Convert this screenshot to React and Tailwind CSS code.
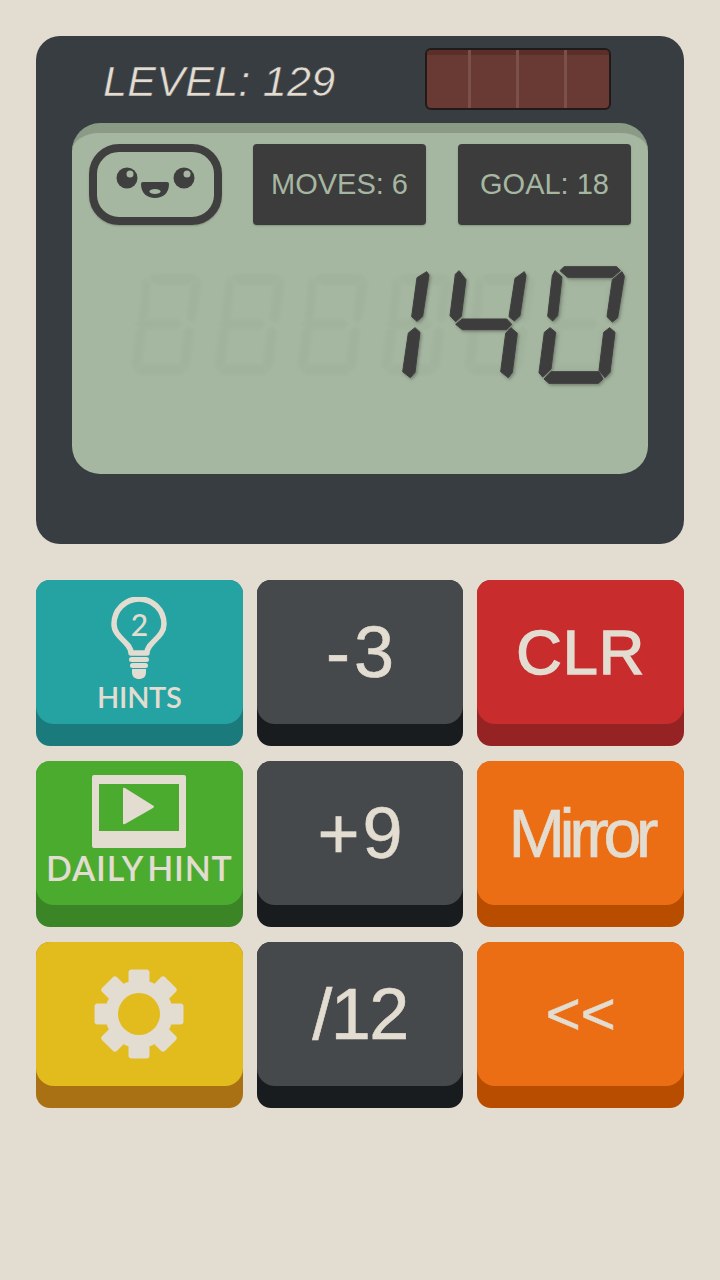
const ZERO = [
  '525,47 537,35 695,35 706,47 682,67 548,67',
  '711,50 718,64 698,188 682,201 666,185 682,74',
  '510,47 531,66 518,182 503,198 488,184 502,62',
  '495,218 512,232 498,342 473,366 462,353 478,232',
  '477,372 498,350 642,350 654,372 640,385 492,385',
  '674,218 690,232 675,352 660,368 642,346 656,232',
];
const MIDDLE = '477,208 497,192 630,192 645,208 630,224 497,224';
const ONE = [
  '125,50 132,60 113,184 96,199 80,185 96,68',
  '90,218 105,232 90,352 76,368 53,350 70,234',
];
const FOUR = [
  '222,47 243,74 229,184 212,200 195,182 211,58',
  '418,50 423,62 405,182 388,198 372,185 390,70',
  '212,208 232,192 365,192 380,208 365,224 232,224',
  '378,218 397,235 382,352 370,368 347,350 362,235',
];
const GHOSTS = [60, 143, 226, 310, 393, 476];

function Display() {
  return (
    <svg className="absolute left-0 top-0" width="576" height="341" viewBox="0 0 576 341">
      <defs>
        <filter id="lcdShadow" x="-10%" y="-10%" width="125%" height="125%">
          <feDropShadow dx="4" dy="5" stdDeviation="4" floodColor="#3a3f38" floodOpacity="0.45" />
        </filter>
        <filter id="ghostBlur">
          <feGaussianBlur stdDeviation="3" />
        </filter>
      </defs>
      {/* unlit segments */}
      {GHOSTS.map((x) => (
        <g key={x} transform={`translate(${x - 124.7} 132) scale(0.27 0.285)`} fill="#97a893" stroke="#97a893" strokeWidth="6" opacity="0.22" filter="url(#ghostBlur)">
          {ZERO.map((p) => <polygon key={p} points={p} />)}
          <polygon points={MIDDLE} />
        </g>
      ))}
      {/* lit segments */}
      <g transform="translate(313 122) scale(0.33333)" fill="#3e3e3e" stroke="#3e3e3e" strokeWidth="3" strokeLinejoin="round" filter="url(#lcdShadow)">
        {[...ONE, ...FOUR, ...ZERO].map((p) => <polygon key={p} points={p} />)}
      </g>
    </svg>
  );
}

function Bulb() {
  return (
    <div className="relative h-[84px] w-[56px]">
      <svg width="56" height="84" viewBox="0 0 56 84" className="absolute left-0 top-0" fill="none">
        <path d="M20 56 C20 45 3 41 3 27 A25 25 0 1 1 53 27 C53 41 36 45 36 56 Z" stroke="#e3dcd0" strokeWidth="5.5" strokeLinejoin="round" />
        <rect x="18" y="60" width="20" height="5" rx="2.5" fill="#e3dcd0" />
        <rect x="19" y="66" width="18" height="5" rx="2.5" fill="#e3dcd0" />
        <path d="M21 72 H35 V75 C35 80 32 82 28 82 C24 82 21 80 21 75 Z" fill="#e3dcd0" />
      </svg>
      <span className="absolute left-0 top-[9px] w-full text-center font-['Lato',sans-serif] text-[30px] font-medium leading-[36px] text-[#e3dcd0]">2</span>
    </div>
  );
}

function VideoIcon() {
  return (
    <svg width="94" height="73" viewBox="0 0 94 73">
      <path fillRule="evenodd" fill="#e3dcd0" d="M2 0 H92 Q94 0 94 2 V71 Q94 73 92 73 H2 Q0 73 0 71 V2 Q0 0 2 0 Z M7 9 V56 H87 V9 Z" />
      <path d="M33 13 Q31 12 31 14 V48 Q31 50 33 49 L61 33 Q63 31.5 61 30.5 Z" fill="#e3dcd0" />
    </svg>
  );
}

function Gear() {
  return (
    <svg width="90" height="90" viewBox="-45 -45 90 90">
      {[0, 45, 90, 135, 180, 225, 270, 315].map((a) => (
        <rect key={a} x="-10.5" y="-44.5" width="21" height="24" rx="3" fill="#e3dcd0" transform={`rotate(${a})`} />
      ))}
      <circle r="34" fill="#e3dcd0" />
      <circle r="21" fill="#e2bb1c" />
    </svg>
  );
}

function Key({ face, base, children, className = '' }) {
  return (
    <div className={`h-[166px] rounded-[14px] ${base}`}>
      <div className={`flex h-[144px] rounded-[14px] rounded-b-[18px] text-[#e3dcd0] ${face} ${className}`}>
        {children}
      </div>
    </div>
  );
}

const labelClass = "m-auto font-['Liberation_Sans',sans-serif] leading-none [-webkit-text-stroke:0.6px_#e3dcd0]";

export default function App() {
  return (
    <div className="h-[1280px] w-[720px] overflow-hidden bg-[#e3dcd0] px-9 pt-9">
      {/* Calculator body */}
      <div className="h-[508px] rounded-[24px] bg-[#383d42]">
        <div className="flex h-[87px] items-center justify-between pl-[67px] pr-[73px]">
          <span className="mt-[3px] font-['Liberation_Sans',sans-serif] text-[43px] italic tracking-[0.3px] text-[#e3dcd0] [-webkit-text-stroke:0.5px_#383d42]">LEVEL: 129</span>
          <div className="relative mt-[-1px] h-[62px] w-[186px] overflow-hidden rounded-[6px] border-2 border-[#221a18] bg-[#693933]">
            <div className="h-[5px] bg-[#5a2e29]" />
            <div className="absolute inset-y-0 left-[41px] w-[3px] bg-[#7a504a]" />
            <div className="absolute inset-y-0 left-[89px] w-[3px] bg-[#7a504a]" />
            <div className="absolute inset-y-0 left-[137px] w-[3px] bg-[#7a504a]" />
          </div>
        </div>

        {/* LCD screen */}
        <div className="relative mx-9 h-[351px] rounded-[28px] border-t-[10px] border-[#8b9a85] bg-[#a6b7a1] px-[17px] pt-[11px]">
          <Display />
          <div className="relative flex gap-[31px]">
            <div className="relative h-[81px] w-[133px] shrink-0 rounded-[30px] border-[8px] border-[#3f3f3f] shadow-[0_1px_2px_rgba(0,0,0,0.2)]">
              <svg width="117" height="65" viewBox="0 0 117 65" className="absolute left-0 top-0">
                <circle cx="30" cy="26" r="10.5" fill="#3f3f3f" />
                <circle cx="33" cy="22" r="3.5" fill="#a6b7a1" />
                <circle cx="87" cy="26" r="10.5" fill="#3f3f3f" />
                <circle cx="90" cy="22" r="3.5" fill="#a6b7a1" />
                <path d="M44 32 Q44 30 46 30 H70 Q72 30 72 32 C72 41 66 46 58 46 C50 46 44 41 44 32 Z" fill="#3f3f3f" />
                <ellipse cx="58" cy="39.5" rx="5.5" ry="2.5" fill="#a6b7a1" />
              </svg>
            </div>
            <div className="flex h-[81px] w-[173px] items-center justify-center rounded-[4px] bg-[#3c3c3c] font-['Liberation_Sans',sans-serif] text-[29px] text-[#a6b7a1] shadow-[0_1px_2px_rgba(0,0,0,0.2)]">MOVES: 6</div>
            <div className="ml-px flex h-[81px] w-[173px] items-center justify-center rounded-[4px] bg-[#3c3c3c] font-['Liberation_Sans',sans-serif] text-[29px] text-[#a6b7a1] shadow-[0_1px_2px_rgba(0,0,0,0.2)]">GOAL: 18</div>
          </div>
        </div>
      </div>

      {/* Keypad */}
      <div className="mt-9 grid grid-cols-3 gap-x-[14px] gap-y-[15px]">
        <Key face="bg-[#25a3a3]" base="bg-[#1a7a7c]" className="flex-col items-center pt-[17px]">
          <Bulb />
          <span className="mt-[1px] font-['Lato',sans-serif] text-[29px] font-semibold leading-[30px] tracking-[-0.3px]">HINTS</span>
        </Key>
        <Key face="bg-[#46494c]" base="bg-[#191c1e]">
          <span className={`${labelClass} pl-[4px] text-[72px] tracking-[4px]`}>-3</span>
        </Key>
        <Key face="bg-[#c82c2c]" base="bg-[#952323]">
          <span className={`${labelClass} text-[63px] tracking-[1px] [-webkit-text-stroke:1.5px_#e3dcd0]`}>CLR</span>
        </Key>

        <Key face="bg-[#4aab2f]" base="bg-[#3b8526]" className="flex-col items-center pt-[14px]">
          <VideoIcon />
          <span className="mt-[2px] whitespace-nowrap font-['Lato',sans-serif] text-[34px] font-semibold leading-[36px] tracking-[0.8px] [word-spacing:-5px]">DAILY HINT</span>
        </Key>
        <Key face="bg-[#46494c]" base="bg-[#191c1e]">
          <span className={`${labelClass} pl-[3px] text-[72px] tracking-[3px]`}>+9</span>
        </Key>
        <Key face="bg-[#ec6e14]" base="bg-[#b84d00]">
          <span className={`${labelClass} text-[68px] tracking-[-5.5px]`}>Mirror</span>
        </Key>

        <Key face="bg-[#e2bb1c]" base="bg-[#aa7114]" className="items-center justify-center">
          <Gear />
        </Key>
        <Key face="bg-[#46494c]" base="bg-[#191c1e]">
          <span className={`${labelClass} text-[72px] tracking-[-1.5px]`}>/12</span>
        </Key>
        <Key face="bg-[#ec6e14]" base="bg-[#b84d00]">
          <span className={`${labelClass} text-[60px]`}>&lt;&lt;</span>
        </Key>
      </div>
    </div>
  );
}
